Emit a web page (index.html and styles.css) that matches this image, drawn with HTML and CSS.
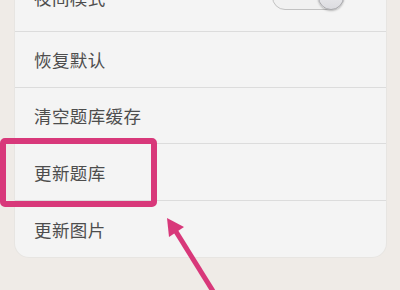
FILE: index.html
```html
<!DOCTYPE html>
<html lang="zh">
<head>
<meta charset="utf-8">
<link rel="stylesheet" href="styles.css">
</head>
<body>
<div class="screen">
  <div class="card">
    <div class="row row-first">
      <span class="label">夜间模式</span>
      <span class="toggle"><span class="dot"></span><span class="knob"></span></span>
    </div>
    <div class="row"><span class="label">恢复默认</span></div>
    <div class="row"><span class="label">清空题库缓存</span></div>
    <div class="row row-tall"><span class="label">更新题库</span></div>
    <div class="row row-last"><span class="label">更新图片</span></div>
  </div>
  <div class="highlight"></div>
  <svg class="arrow" width="400" height="290" viewBox="0 0 400 290">
    <line x1="175" y1="230" x2="216" y2="296" stroke="#d8387a" stroke-width="5"/>
    <polygon points="167,218 169,237 184,227" fill="#d8387a"/>
  </svg>
</div>
</body>
</html>
```
FILE: styles.css
```css
html, body {
  margin: 0;
  padding: 0;
}
body {
  background: #efebe7;
  font-family: "Noto Sans CJK SC", "Noto Sans", sans-serif;
  overflow: hidden;
}
.screen {
  position: relative;
  width: 400px;
  height: 290px;
  overflow: hidden;
}
.card {
  margin: -31px 0 0 15px;
  width: 371px;
  background: #f4f4f4;
  border-radius: 0 0 14px 14px;
  box-shadow: 0 0 0 1px #e7e5e2;
}
.row {
  box-sizing: border-box;
  height: 56px;
  display: flex;
  align-items: center;
  padding-left: 19px;
  border-bottom: 1px solid #dcdcdc;
}
.row-first {
  height: 63px;
  padding-bottom: 6px;
}
.row-tall {
  height: 57px;
}
.row-last {
  border-bottom: none;
}
.label {
  font-size: 17.5px;
  color: #4d4d4d;
  letter-spacing: 0.4px;
}
.toggle {
  position: relative;
  margin-left: auto;
  margin-right: 42px;
  box-sizing: border-box;
  width: 72px;
  height: 26px;
  border-radius: 13px;
  background: #f1f1f1;
  border: 1px solid #c2c2c2;
}
.dot {
  position: absolute;
  left: 18px;
  top: 10px;
  width: 5px;
  height: 5px;
  border-radius: 50%;
  background: #777;
}
.knob {
  position: absolute;
  right: -1px;
  top: -1px;
  box-sizing: border-box;
  width: 26px;
  height: 26px;
  border-radius: 50%;
  background: linear-gradient(#f0f0f2, #dcdce0);
  border: 1px solid #a9a9ad;
  box-shadow: 0 1px 2px rgba(0,0,0,0.25);
}
.highlight {
  position: absolute;
  left: 0;
  top: 138px;
  box-sizing: border-box;
  width: 157px;
  height: 69px;
  border: 6px solid #d8387a;
  border-radius: 5px;
}
.arrow {
  position: absolute;
  left: 0;
  top: 0;
}
```
